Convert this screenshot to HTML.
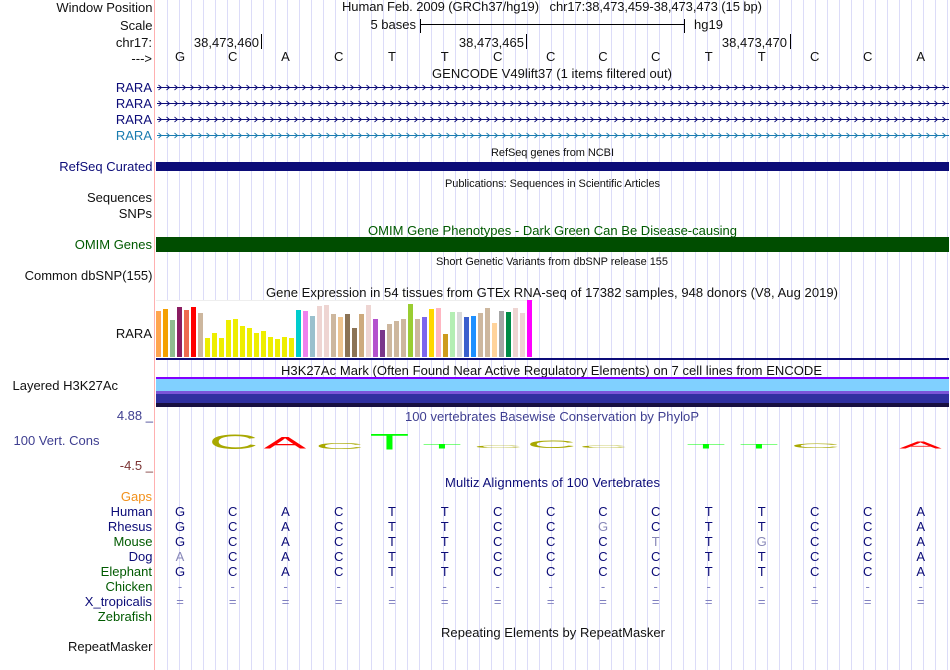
<!DOCTYPE html>
<html><head><meta charset="utf-8"><title>Genome Browser</title>
<style>
html,body{margin:0;padding:0;background:#fff;width:950px;height:670px;overflow:hidden}
svg{display:block}
text{font-family:"Liberation Sans",sans-serif;font-size:13px;fill:#111}
.r{text-anchor:end}
.m{text-anchor:middle}
.s{font-size:11px}
.n{fill:#0c0c78}
.g{fill:#005a00}
.b{fill:#1a7cb0}
.l{fill:#3e3e90}
.k{fill:#8080c0}
.h{fill:#8888b8}
</style></head><body>
<svg xmlns="http://www.w3.org/2000/svg" width="950" height="670" viewBox="0 0 950 670">
<defs>
<path id="c1" d="M158.5 85L161.5 87.5L158.5 90" fill="none" stroke-width="0.9"/>
<g id="c10"><use href="#c1"/><use href="#c1" x="8"/><use href="#c1" x="16"/><use href="#c1" x="24"/><use href="#c1" x="32"/><use href="#c1" x="40"/><use href="#c1" x="48"/><use href="#c1" x="56"/><use href="#c1" x="64"/><use href="#c1" x="72"/></g>
<g id="c100"><use href="#c10"/><use href="#c10" x="80"/><use href="#c10" x="160"/><use href="#c10" x="240"/><use href="#c10" x="320"/><use href="#c10" x="400"/><use href="#c10" x="480"/><use href="#c10" x="560"/><use href="#c10" x="640"/><use href="#c10" x="720"/></g>
</defs>
<rect width="950" height="670" fill="#fff"/>
<path d="M167 335H949" stroke="#dcdcf8" stroke-width="670" stroke-dasharray="1 11" fill="none"/>
<rect x="154" y="0" width="1" height="670" fill="#ffb0b0"/>

<!-- left labels -->
<text class="r" x="152.5" y="12">Window Position</text>
<text class="r" x="152.5" y="30">Scale</text>
<text class="r" x="152" y="47">chr17:</text>
<text class="r" x="152" y="63">---&gt;</text>
<text class="r n" x="152" y="92">RARA</text>
<text class="r n" x="152" y="108">RARA</text>
<text class="r n" x="152" y="124">RARA</text>
<text class="r b" x="152" y="140">RARA</text>
<text class="r n" x="152.5" y="171">RefSeq Curated</text>
<text class="r" x="152" y="202">Sequences</text>
<text class="r" x="152" y="218">SNPs</text>
<text class="r g" x="152" y="249">OMIM Genes</text>
<text class="r" x="152.5" y="280">Common dbSNP(155)</text>
<text class="r" x="152" y="338">RARA</text>
<text class="r" x="118" y="390">Layered H3K27Ac</text>
<text class="r l" x="153" y="420">4.88 _</text>
<text class="l" x="13.5" y="445">100 Vert. Cons</text>
<text class="r" style="fill:#7b3434" x="153" y="470">-4.5 _</text>
<text class="r" style="fill:#f2901a" x="152" y="501">Gaps</text>
<text class="r n" x="152.5" y="516">Human</text>
<text class="r n" x="152" y="531">Rhesus</text>
<text class="r g" x="152.5" y="546">Mouse</text>
<text class="r n" x="152.5" y="561">Dog</text>
<text class="r g" x="152" y="576">Elephant</text>
<text class="r g" x="152.5" y="591">Chicken</text>
<text class="r n" x="152" y="606">X_tropicalis</text>
<text class="r g" x="152" y="621">Zebrafish</text>
<text class="r" x="152.5" y="651">RepeatMasker</text>

<!-- header -->
<text x="342" y="11" textLength="420">Human Feb. 2009 (GRCh37/hg19) &#160; chr17:38,473,459-38,473,473 (15 bp)</text>
<text class="r" x="416" y="29">5 bases</text>
<rect x="420" y="24" width="265" height="1" fill="#000"/>
<rect x="420" y="19" width="1" height="14" fill="#000"/>
<rect x="684" y="19" width="1" height="14" fill="#000"/>
<text x="694" y="29">hg19</text>
<text class="r" x="259" y="47">38,473,460</text><rect x="261" y="34" width="1" height="15" fill="#000"/>
<text class="r" x="524" y="47">38,473,465</text><rect x="526" y="34" width="1" height="15" fill="#000"/>
<text class="r" x="787" y="47">38,473,470</text><rect x="790" y="34" width="1" height="15" fill="#000"/>

<g text-anchor="middle">
<text class="m" x="180" y="61">G</text><text class="m" x="232.7" y="61">C</text><text class="m" x="285.5" y="61">A</text><text class="m" x="338.7" y="61">C</text><text class="m" x="392" y="61">T</text><text class="m" x="444.7" y="61">T</text><text class="m" x="497.7" y="61">C</text><text class="m" x="550.7" y="61">C</text><text class="m" x="603" y="61">C</text><text class="m" x="655.7" y="61">C</text><text class="m" x="708.7" y="61">T</text><text class="m" x="761.7" y="61">T</text><text class="m" x="814.7" y="61">C</text><text class="m" x="867.7" y="61">C</text><text class="m" x="920.7" y="61">A</text>
</g>

<text x="432" y="78" textLength="240">GENCODE V49lift37 (1 items filtered out)</text>

<!-- genes -->
<g stroke="#0c0c78">
<rect x="157" y="87" width="792" height="1" fill="#0c0c78" stroke="none"/>
<use href="#c100"/>
<rect x="157" y="103" width="792" height="1" fill="#0c0c78" stroke="none"/>
<use href="#c100" y="16"/>
<rect x="157" y="119" width="792" height="1" fill="#0c0c78" stroke="none"/>
<use href="#c100" y="32"/>
</g>
<g stroke="#1a7cb0">
<rect x="157" y="135" width="792" height="1" fill="#1a7cb0" stroke="none"/>
<use href="#c100" y="48"/>
</g>

<text x="491" y="156" class="s" textLength="123">RefSeq genes from NCBI</text>
<rect x="156" y="162" width="793" height="9" fill="#0c0c78"/>
<text x="445" y="187" class="s" textLength="215">Publications: Sequences in Scientific Articles</text>
<text x="368" y="235" class="g" textLength="369">OMIM Gene Phenotypes - Dark Green Can Be Disease-causing</text>
<rect x="156" y="237" width="793" height="15" fill="#004d00"/>
<text x="436" y="265" class="s" textLength="232">Short Genetic Variants from dbSNP release 155</text>
<text x="266" y="297" textLength="572">Gene Expression in 54 tissues from GTEx RNA-seq of 17382 samples, 948 donors (V8, Aug 2019)</text>

<!-- GTEx bars -->
<rect x="156" y="300" width="377" height="58" fill="#fff"/>
<rect x="156" y="300" width="377" height="1" fill="#eeeeee"/>
<rect x="156" y="311" width="5" height="46" fill="#ffa54f"/>
<rect x="163" y="309" width="5" height="48" fill="#f4a000"/>
<rect x="170" y="320" width="5" height="37" fill="#8fbc8f"/>
<rect x="177" y="307" width="5" height="50" fill="#8b1c62"/>
<rect x="184" y="310" width="5" height="47" fill="#ee6a50"/>
<rect x="191" y="307" width="5" height="50" fill="#ff0000"/>
<rect x="198" y="313" width="5" height="44" fill="#cdb79e"/>
<rect x="205" y="338" width="5" height="19" fill="#eeee00"/>
<rect x="212" y="333" width="5" height="24" fill="#eeee00"/>
<rect x="219" y="338" width="5" height="19" fill="#eeee00"/>
<rect x="226" y="320" width="5" height="37" fill="#eeee00"/>
<rect x="233" y="319" width="5" height="38" fill="#eeee00"/>
<rect x="240" y="326" width="5" height="31" fill="#eeee00"/>
<rect x="247" y="328" width="5" height="29" fill="#eeee00"/>
<rect x="254" y="333" width="5" height="24" fill="#eeee00"/>
<rect x="261" y="331" width="5" height="26" fill="#eeee00"/>
<rect x="268" y="337" width="5" height="20" fill="#eeee00"/>
<rect x="275" y="339" width="5" height="18" fill="#eeee00"/>
<rect x="282" y="337" width="5" height="20" fill="#eeee00"/>
<rect x="289" y="338" width="5" height="19" fill="#eeee00"/>
<rect x="296" y="310" width="5" height="47" fill="#00cdcd"/>
<rect x="303" y="311" width="5" height="46" fill="#ee82ee"/>
<rect x="310" y="316" width="5" height="41" fill="#9ac0cd"/>
<rect x="317" y="306" width="5" height="51" fill="#eed5d2"/>
<rect x="324" y="305" width="5" height="52" fill="#eed5d2"/>
<rect x="331" y="314" width="5" height="43" fill="#cdb79e"/>
<rect x="338" y="317" width="5" height="40" fill="#eec591"/>
<rect x="345" y="314" width="5" height="43" fill="#8b7355"/>
<rect x="352" y="328" width="5" height="29" fill="#8b7355"/>
<rect x="359" y="314" width="5" height="43" fill="#cdaa7d"/>
<rect x="366" y="305" width="5" height="52" fill="#eed5d2"/>
<rect x="373" y="319" width="5" height="38" fill="#b452cd"/>
<rect x="380" y="330" width="5" height="27" fill="#7a378b"/>
<rect x="387" y="324" width="5" height="33" fill="#cdb79e"/>
<rect x="394" y="321" width="5" height="36" fill="#cdb79e"/>
<rect x="401" y="319" width="5" height="38" fill="#cdb79e"/>
<rect x="408" y="304" width="5" height="53" fill="#9acd32"/>
<rect x="415" y="319" width="5" height="38" fill="#cdb79e"/>
<rect x="422" y="317" width="5" height="40" fill="#7d66ee"/>
<rect x="429" y="309" width="5" height="48" fill="#ffd700"/>
<rect x="436" y="308" width="5" height="49" fill="#ffb6c1"/>
<rect x="443" y="334" width="5" height="23" fill="#cd9b1d"/>
<rect x="450" y="312" width="5" height="45" fill="#b4eeb4"/>
<rect x="457" y="312" width="5" height="45" fill="#d9d9d9"/>
<rect x="464" y="317" width="5" height="40" fill="#3a5fcd"/>
<rect x="471" y="316" width="5" height="41" fill="#1e90ff"/>
<rect x="478" y="313" width="5" height="44" fill="#cdb79e"/>
<rect x="485" y="308" width="5" height="49" fill="#cdb79e"/>
<rect x="492" y="323" width="5" height="34" fill="#ffd39b"/>
<rect x="499" y="311" width="5" height="46" fill="#a6a6a6"/>
<rect x="506" y="312" width="5" height="45" fill="#008b45"/>
<rect x="513" y="308" width="5" height="49" fill="#eed5d2"/>
<rect x="520" y="313" width="5" height="44" fill="#eed5d2"/>
<rect x="527" y="300" width="5" height="57" fill="#ff00ff"/>
<rect x="156" y="358" width="793" height="2" fill="#0c0c78"/>

<text x="281" y="375" textLength="541">H3K27Ac Mark (Often Found Near Active Regulatory Elements) on 7 cell lines from ENCODE</text>
<rect x="156" y="377" width="793" height="2" fill="#8000ff"/>
<rect x="156" y="379" width="793" height="12" fill="#80d0ff"/>
<rect x="156" y="391" width="793" height="3" fill="#7a55d8"/>
<rect x="156" y="394" width="793" height="9" fill="#3030a0"/>
<rect x="156" y="403" width="793" height="4" fill="#181040"/>

<text x="405" y="421" class="l" textLength="294">100 vertebrates Basewise Conservation by PhyloP</text>

<!-- conservation logo -->
<g text-anchor="middle">
<text class="m" transform="translate(233.5,449) scale(5.3,1.6)" style="fill:#a8a800">C</text>
<text class="m" transform="translate(285,448.5) scale(4.9,1.3)" style="fill:#ff0000">A</text>
<text class="m" transform="translate(339.5,449) scale(5.2,0.6)" style="fill:#a8a800">C</text>
<text class="m" transform="translate(389.5,449.5) scale(5,1.7)" style="fill:#00ff00">T</text>
<text class="m" transform="translate(442,448.5) scale(5,0.5)" style="fill:#00ff00">T</text>
<text class="m" transform="translate(498,448) scale(5.3,0.28)" style="fill:#a8a800">C</text>
<text class="m" transform="translate(551.5,448) scale(5.3,0.85)" style="fill:#a8a800">C</text>
<text class="m" transform="translate(603.5,448) scale(5.3,0.28)" style="fill:#a8a800">C</text>
<text class="m" transform="translate(706,448.5) scale(5,0.5)" style="fill:#00ff00">T</text>
<text class="m" transform="translate(759,448.5) scale(5,0.5)" style="fill:#00ff00">T</text>
<text class="m" transform="translate(815.5,448) scale(5.3,0.5)" style="fill:#a8a800">C</text>
<text class="m" transform="translate(920.5,448.5) scale(4.9,0.75)" style="fill:#ff0000">A</text>
</g>

<text x="445" y="487" class="n" textLength="215">Multiz Alignments of 100 Vertebrates</text>

<!-- alignment -->
<g>
<text class="m n" x="180" y="516">G</text><text class="m n" x="232.7" y="516">C</text><text class="m n" x="285.5" y="516">A</text><text class="m n" x="338.7" y="516">C</text><text class="m n" x="392" y="516">T</text><text class="m n" x="444.7" y="516">T</text><text class="m n" x="497.7" y="516">C</text><text class="m n" x="550.7" y="516">C</text><text class="m n" x="603" y="516">C</text><text class="m n" x="655.7" y="516">C</text><text class="m n" x="708.7" y="516">T</text><text class="m n" x="761.7" y="516">T</text><text class="m n" x="814.7" y="516">C</text><text class="m n" x="867.7" y="516">C</text><text class="m n" x="920.7" y="516">A</text>
<text class="m n" x="180" y="531">G</text><text class="m n" x="232.7" y="531">C</text><text class="m n" x="285.5" y="531">A</text><text class="m n" x="338.7" y="531">C</text><text class="m n" x="392" y="531">T</text><text class="m n" x="444.7" y="531">T</text><text class="m n" x="497.7" y="531">C</text><text class="m n" x="550.7" y="531">C</text><text class="m h" x="603" y="531">G</text><text class="m n" x="655.7" y="531">C</text><text class="m n" x="708.7" y="531">T</text><text class="m n" x="761.7" y="531">T</text><text class="m n" x="814.7" y="531">C</text><text class="m n" x="867.7" y="531">C</text><text class="m n" x="920.7" y="531">A</text>
<text class="m n" x="180" y="546">G</text><text class="m n" x="232.7" y="546">C</text><text class="m n" x="285.5" y="546">A</text><text class="m n" x="338.7" y="546">C</text><text class="m n" x="392" y="546">T</text><text class="m n" x="444.7" y="546">T</text><text class="m n" x="497.7" y="546">C</text><text class="m n" x="550.7" y="546">C</text><text class="m n" x="603" y="546">C</text><text class="m h" x="655.7" y="546">T</text><text class="m n" x="708.7" y="546">T</text><text class="m h" x="761.7" y="546">G</text><text class="m n" x="814.7" y="546">C</text><text class="m n" x="867.7" y="546">C</text><text class="m n" x="920.7" y="546">A</text>
<text class="m h" x="180" y="561">A</text><text class="m n" x="232.7" y="561">C</text><text class="m n" x="285.5" y="561">A</text><text class="m n" x="338.7" y="561">C</text><text class="m n" x="392" y="561">T</text><text class="m n" x="444.7" y="561">T</text><text class="m n" x="497.7" y="561">C</text><text class="m n" x="550.7" y="561">C</text><text class="m n" x="603" y="561">C</text><text class="m n" x="655.7" y="561">C</text><text class="m n" x="708.7" y="561">T</text><text class="m n" x="761.7" y="561">T</text><text class="m n" x="814.7" y="561">C</text><text class="m n" x="867.7" y="561">C</text><text class="m n" x="920.7" y="561">A</text>
<text class="m n" x="180" y="576">G</text><text class="m n" x="232.7" y="576">C</text><text class="m n" x="285.5" y="576">A</text><text class="m n" x="338.7" y="576">C</text><text class="m n" x="392" y="576">T</text><text class="m n" x="444.7" y="576">T</text><text class="m n" x="497.7" y="576">C</text><text class="m n" x="550.7" y="576">C</text><text class="m n" x="603" y="576">C</text><text class="m n" x="655.7" y="576">C</text><text class="m n" x="708.7" y="576">T</text><text class="m n" x="761.7" y="576">T</text><text class="m n" x="814.7" y="576">C</text><text class="m n" x="867.7" y="576">C</text><text class="m n" x="920.7" y="576">A</text>
<text class="m k" x="180" y="591">-</text><text class="m k" x="232.7" y="591">-</text><text class="m k" x="285.5" y="591">-</text><text class="m k" x="338.7" y="591">-</text><text class="m k" x="392" y="591">-</text><text class="m k" x="444.7" y="591">-</text><text class="m k" x="497.7" y="591">-</text><text class="m k" x="550.7" y="591">-</text><text class="m k" x="603" y="591">-</text><text class="m k" x="655.7" y="591">-</text><text class="m k" x="708.7" y="591">-</text><text class="m k" x="761.7" y="591">-</text><text class="m k" x="814.7" y="591">-</text><text class="m k" x="867.7" y="591">-</text><text class="m k" x="920.7" y="591">-</text>
<text class="m k" x="180" y="606">=</text><text class="m k" x="232.7" y="606">=</text><text class="m k" x="285.5" y="606">=</text><text class="m k" x="338.7" y="606">=</text><text class="m k" x="392" y="606">=</text><text class="m k" x="444.7" y="606">=</text><text class="m k" x="497.7" y="606">=</text><text class="m k" x="550.7" y="606">=</text><text class="m k" x="603" y="606">=</text><text class="m k" x="655.7" y="606">=</text><text class="m k" x="708.7" y="606">=</text><text class="m k" x="761.7" y="606">=</text><text class="m k" x="814.7" y="606">=</text><text class="m k" x="867.7" y="606">=</text><text class="m k" x="920.7" y="606">=</text>
</g>

<text x="441" y="637" textLength="224">Repeating Elements by RepeatMasker</text>
</svg>
</body></html>
